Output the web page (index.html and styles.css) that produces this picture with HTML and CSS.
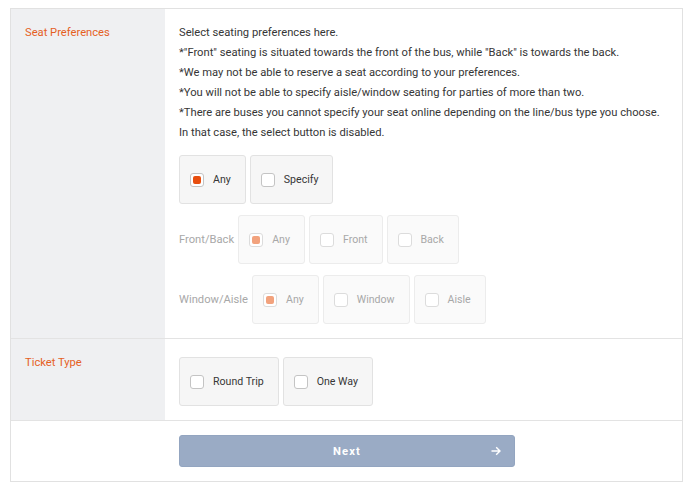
FILE: index.html
```html
<!DOCTYPE html>
<html>
<head>
<meta charset="utf-8">
<link rel="stylesheet" href="styles.css">
</head>
<body>
<div class="frame">
  <div class="row row-seat">
    <div class="label-cell">Seat Preferences</div>
    <div class="content-cell">
      <div class="notes">
        <p>Select seating preferences here.</p>
        <p>*"Front" seating is situated towards the front of the bus, while "Back" is towards the back.</p>
        <p>*We may not be able to reserve a seat according to your preferences.</p>
        <p>*You will not be able to specify aisle/window seating for parties of more than two.</p>
        <p>*There are buses you cannot specify your seat online depending on the line/bus type you choose.</p>
        <p>In that case, the select button is disabled.</p>
      </div>
      <div class="opt-row first">
        <div class="opt"><span class="box checked"></span><span class="opt-text">Any</span></div>
        <div class="opt"><span class="box"></span><span class="opt-text">Specify</span></div>
      </div>
      <div class="opt-row disabled">
        <span class="row-label">Front/Back</span>
        <div class="opt"><span class="box checked"></span><span class="opt-text">Any</span></div>
        <div class="opt"><span class="box"></span><span class="opt-text">Front</span></div>
        <div class="opt"><span class="box"></span><span class="opt-text">Back</span></div>
      </div>
      <div class="opt-row disabled">
        <span class="row-label">Window/Aisle</span>
        <div class="opt"><span class="box checked"></span><span class="opt-text">Any</span></div>
        <div class="opt"><span class="box"></span><span class="opt-text">Window</span></div>
        <div class="opt"><span class="box"></span><span class="opt-text">Aisle</span></div>
      </div>
    </div>
  </div>
  <div class="row row-ticket">
    <div class="label-cell">Ticket Type</div>
    <div class="content-cell ticket-cell">
      <div class="opt-row">
        <div class="opt"><span class="box"></span><span class="opt-text">Round Trip</span></div>
        <div class="opt"><span class="box"></span><span class="opt-text">One Way</span></div>
      </div>
    </div>
  </div>
  <div class="footer">
    <button class="next-btn"><span class="next-text">Next</span>
      <svg class="arrow" width="10" height="10" viewBox="0 0 10 10"><path d="M0.5 5H9M5.2 1.2L9 5L5.2 8.8" fill="none" stroke="#fff" stroke-width="1.4"/></svg>
    </button>
  </div>
</div>
</body>
</html>
```

FILE: styles.css
```css
* { box-sizing: border-box; }
body {
  margin: 0;
  padding: 8px 0 0 10px;
  font-family: Roboto, "Liberation Sans", sans-serif;
  font-size: 11.2px;
  color: #363636;
  background: #fff;
}
.frame {
  width: 673px;
  border: 1px solid #e1e1e1;
}
.row {
  display: grid;
  grid-template-columns: 154px 1fr;
  border-bottom: 1px solid #e3e3e3;
}
.label-cell {
  background: #eff0f2;
  color: #e5601f;
  padding: 14px 0 0 14px;
  line-height: 20px;
}
.content-cell {
  padding: 14px 14px 14px 14px;
}
.notes p {
  margin: 0;
  line-height: 20px;
}
.opt-row {
  display: flex;
  align-items: center;
  gap: 4px;
  margin-top: 11px;
}
.opt-row.first { margin-top: 12px; }
.ticket-cell { padding-top: 18px; }
.ticket-cell .opt-row { margin-top: 0; }
.row-label {
  color: #a8a8a8;
}
.opt {
  display: flex;
  align-items: center;
  height: 49px;
  padding: 0 14px 0 10px;
  border: 1px solid #e2e2e2;
  border-radius: 3px;
  background: #f6f6f6;
  font-size: 10.6px;
}
.box {
  width: 14px;
  height: 14px;
  border: 1px solid #c4c4c4;
  border-radius: 3px;
  background: #fff;
  margin-right: 9px;
  display: flex;
  align-items: center;
  justify-content: center;
}
.box.checked::after {
  content: "";
  width: 8px;
  height: 8px;
  border-radius: 2px;
  background: #e84e0f;
}
.disabled .opt {
  background: #fafafa;
  border-color: #ececec;
}
.disabled .opt-text { color: #a8a8a8; }
.disabled .box { border-color: #dcdcdc; }
.disabled .box.checked::after { background: #f2a27d; }
.footer {
  padding: 14px 0 14px 168px;
}
.next-btn {
  position: relative;
  width: 336px;
  height: 32px;
  border: 1px solid #93a5c0;
  border-radius: 3px;
  background: #9aabc5;
  color: #fff;
  font-family: Roboto, "Liberation Sans", sans-serif;
  font-size: 11.2px;
  font-weight: bold;
  letter-spacing: 1.2px;
  display: flex;
  align-items: center;
  justify-content: center;
  padding: 0;
}
.arrow {
  position: absolute;
  right: 13px;
  top: 10px;
}
```
